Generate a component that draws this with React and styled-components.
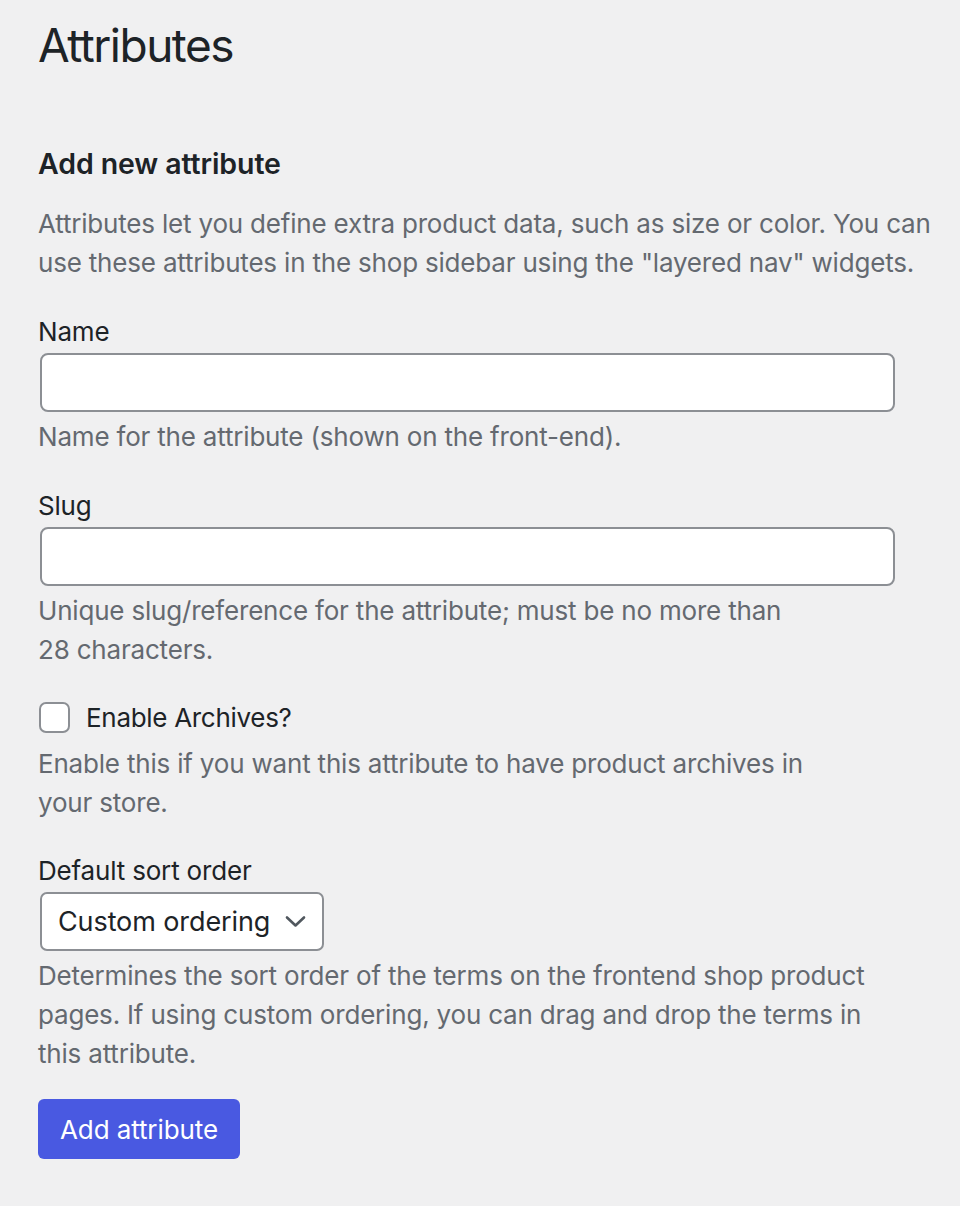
import React from "react";
import styled, { createGlobalStyle } from "styled-components";

const Global = createGlobalStyle`
  html, body { margin: 0; padding: 0; background: #f0f0f1; }
  body { font-family: Inter, "Noto Sans", sans-serif; color: #1d2327; -webkit-font-smoothing: antialiased; }
  * { box-sizing: border-box; }
`;

const Page = styled.div`
  padding: 15px 0 40px 38px;
  min-height: 1206px;
  background: #f0f0f1;
`;

const Title = styled.h1`
  margin: 0;
  font-size: 46px;
  line-height: 60px;
  font-weight: 400;
  color: #1d2327;
  letter-spacing: -1.5px;
`;

const Form = styled.form`
  display: flex;
  flex-direction: column;
  margin-top: 71px;
`;

const Heading = styled.h2`
  margin: 0;
  font-size: 28.5px;
  line-height: 35px;
  font-weight: 600;
  color: #1d2327;
  letter-spacing: -0.1px;
`;

const Text = styled.p`
  margin: ${(p) => p.$mt || 0}px 0 0;
  font-size: 26px;
  line-height: 39px;
  color: #646970;
  white-space: nowrap;
  letter-spacing: -0.19px;
`;

const Field = styled.div`
  display: flex;
  flex-direction: column;
  margin-top: ${(p) => p.$mt || 30}px;
`;

const Label = styled.label`
  font-size: 26px;
  line-height: 39px;
  color: #1d2327;
  letter-spacing: -0.18px;
`;

const Input = styled.input`
  width: 855px;
  height: 59px;
  margin: 2px 0 0 2px;
  border: 2px solid #8c8f94;
  border-radius: 8px;
  background: #fff;
  font: inherit;
  font-size: 26px;
  padding: 0 16px;
`;

const Help = styled.p`
  margin: ${(p) => (p.$mt === undefined ? 5 : p.$mt)}px 0 0;
  font-size: 26px;
  line-height: 39px;
  color: #646970;
  white-space: nowrap;
  letter-spacing: -0.19px;
`;

const CheckRow = styled.label`
  display: flex;
  align-items: center;
  gap: 16px;
  font-size: 26px;
  line-height: 39px;
  color: #1d2327;
  letter-spacing: -0.3px;
`;

const Box = styled.span`
  width: 31px;
  height: 31px;
  border: 2px solid #8c8f94;
  border-radius: 7px;
  background: #fff;
  flex: none;
  margin-left: 1px;
`;

const SelectBox = styled.div`
  display: flex;
  align-items: center;
  justify-content: space-between;
  width: 284px;
  height: 59px;
  margin: 2px 0 0 2px;
  padding: 0 16px 0 16px;
  border: 2px solid #8c8f94;
  border-radius: 7px;
  background: #fff;
  font-size: 27px;
  letter-spacing: -0.1px;
  color: #1d2327;
  white-space: nowrap;

  svg { flex: none; }
`;

const Button = styled.button`
  align-self: flex-start;
  margin-top: 26px;
  height: 60px;
  padding: 0 22px;
  border: none;
  border-radius: 6px;
  background: #4959e1;
  color: #fff;
  font: inherit;
  font-size: 26px;
  letter-spacing: -0.1px;
`;

export default function App() {
  return (
    <>
      <Global />
      <Page>
        <Title>Attributes</Title>
        <Form>
          <Heading>Add new attribute</Heading>
          <Text $mt={23}>
            Attributes let you define extra product data, such as size or color. You can
            <br />
            use these attributes in the shop sidebar using the "layered nav" widgets.
          </Text>

          <Field>
            <Label>Name</Label>
            <Input type="text" />
            <Help>Name for the attribute (shown on the front-end).</Help>
          </Field>

          <Field>
            <Label>Slug</Label>
            <Input type="text" />
            <Help>
              Unique slug/reference for the attribute; must be no more than
              <br />
              28 characters.
            </Help>
          </Field>

          <Field $mt={29}>
            <CheckRow>
              <Box />
              Enable Archives?
            </CheckRow>
            <Help $mt={7}>
              Enable this if you want this attribute to have product archives in
              <br />
              your store.
            </Help>
          </Field>

          <Field $mt={29}>
            <Label>Default sort order</Label>
            <SelectBox>
              <span>Custom ordering</span>
              <svg width="21" height="13" viewBox="0 0 21 13" fill="none">
                <path d="M2 2.5 L10.5 10.5 L19 2.5" stroke="#50575e" strokeWidth="2.6" strokeLinecap="round" strokeLinejoin="round" />
              </svg>
            </SelectBox>
            <Help>
              Determines the sort order of the terms on the frontend shop product
              <br />
              pages. If using custom ordering, you can drag and drop the terms in
              <br />
              this attribute.
            </Help>
          </Field>

          <Button type="button">Add attribute</Button>
        </Form>
      </Page>
    </>
  );
}
